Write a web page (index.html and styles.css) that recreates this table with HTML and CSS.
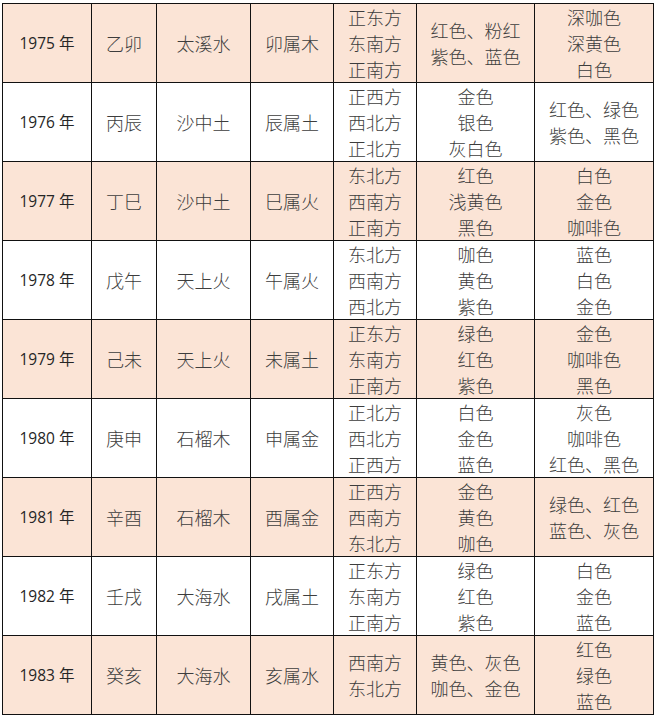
FILE: index.html
```html
<!DOCTYPE html>
<html lang="zh-CN">
<head>
<meta charset="utf-8">
<title>生肖表</title>
<link rel="stylesheet" href="styles.css">
</head>
<body>
<table class="grid">
  <colgroup>
    <col class="c1"><col class="c2"><col class="c3"><col class="c4"><col class="c5"><col class="c6"><col class="c7">
  </colgroup>
  <tbody>
    <tr class="peach">
      <td class="year">1975 年</td><td>乙卯</td><td>太溪水</td><td>卯属木</td>
      <td>正东方<br>东南方<br>正南方</td><td>红色、粉红<br>紫色、蓝色</td><td>深咖色<br>深黄色<br>白色</td>
    </tr>
    <tr>
      <td class="year">1976 年</td><td>丙辰</td><td>沙中土</td><td>辰属土</td>
      <td>正西方<br>西北方<br>正北方</td><td>金色<br>银色<br>灰白色</td><td>红色、绿色<br>紫色、黑色</td>
    </tr>
    <tr class="peach short">
      <td class="year">1977 年</td><td>丁巳</td><td>沙中土</td><td>巳属火</td>
      <td>东北方<br>西南方<br>正南方</td><td>红色<br>浅黄色<br>黑色</td><td>白色<br>金色<br>咖啡色</td>
    </tr>
    <tr>
      <td class="year">1978 年</td><td>戊午</td><td>天上火</td><td>午属火</td>
      <td>东北方<br>西南方<br>西北方</td><td>咖色<br>黄色<br>紫色</td><td>蓝色<br>白色<br>金色</td>
    </tr>
    <tr class="peach">
      <td class="year">1979 年</td><td>己未</td><td>天上火</td><td>未属土</td>
      <td>正东方<br>东南方<br>正南方</td><td>绿色<br>红色<br>紫色</td><td>金色<br>咖啡色<br>黑色</td>
    </tr>
    <tr>
      <td class="year">1980 年</td><td>庚申</td><td>石榴木</td><td>申属金</td>
      <td>正北方<br>西北方<br>正西方</td><td>白色<br>金色<br>蓝色</td><td>灰色<br>咖啡色<br>红色、黑色</td>
    </tr>
    <tr class="peach">
      <td class="year">1981 年</td><td>辛酉</td><td>石榴木</td><td>酉属金</td>
      <td>正西方<br>西南方<br>东北方</td><td>金色<br>黄色<br>咖色</td><td>绿色、红色<br>蓝色、灰色</td>
    </tr>
    <tr>
      <td class="year">1982 年</td><td>壬戌</td><td>大海水</td><td>戌属土</td>
      <td>正东方<br>东南方<br>正南方</td><td>绿色<br>红色<br>紫色</td><td>白色<br>金色<br>蓝色</td>
    </tr>
    <tr class="peach">
      <td class="year">1983 年</td><td>癸亥</td><td>大海水</td><td>亥属水</td>
      <td>西南方<br>东北方</td><td>黄色、灰色<br>咖色、金色</td><td>红色<br>绿色<br>蓝色</td>
    </tr>
  </tbody>
</table>
</body>
</html>
```

FILE: styles.css
```css
html, body {
  margin: 0;
  padding: 0;
  background: #ffffff;
}

body {
  padding: 3px 0 0 2px;
}

.grid {
  border-collapse: separate;
  border-spacing: 0;
  table-layout: fixed;
  width: 652px;
  border-top: 1px solid #111;
  border-left: 1px solid #111;
}

.c1 { width: 89px; }
.c2 { width: 65px; }
.c3 { width: 94px; }
.c4 { width: 83px; }
.c5 { width: 83px; }
.c6 { width: 118px; }
.c7 { width: 119px; }

.grid tr {
  height: 79px;
}

.grid tr.short {
  height: 78px;
}

.grid td {
  box-sizing: border-box;
  padding: 0;
  border-right: 1px solid #111;
  border-bottom: 1px solid #111;
  text-align: center;
  vertical-align: middle;
  font-family: "Noto Sans CJK SC", sans-serif;
  font-weight: 300;
  font-size: 18px;
  line-height: 26px;
  color: #3d3d3d;
  white-space: nowrap;
}

.grid tr.peach td {
  background: #fbe4d6;
}

.grid td.year {
  font-family: "Open Sans", "Noto Sans CJK SC", sans-serif;
  font-weight: 400;
  font-size: 15.5px;
  color: #262626;
}
```
